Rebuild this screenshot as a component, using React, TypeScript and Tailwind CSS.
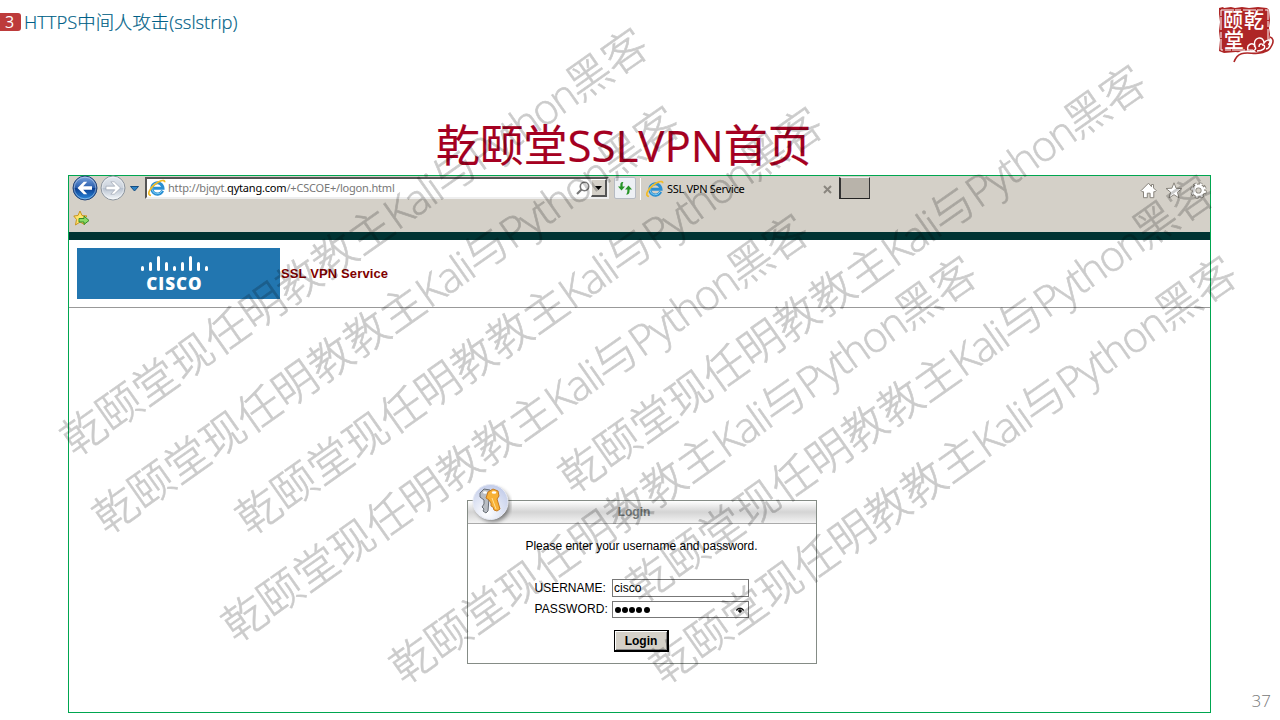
import React from 'react';

const marks: [number, number][] = [
  [83, 431], [115, 509], [258, 510], [244, 617], [412, 659], [581, 468], [649, 578], [672, 659],
];

function Watermark({ x, y }: { x: number; y: number }) {
  return (
    <div
      className="absolute flex h-[60px] origin-[22px_30px] rotate-[-35.1deg] items-center whitespace-nowrap font-['Open_Sans','Noto_Sans_CJK_SC',sans-serif] text-[43.8px] leading-[60px] font-light text-black opacity-20 [-webkit-text-stroke:0.7px_black]"
      style={{ left: x - 22, top: y - 30 }}
    >
      <p>
        乾颐堂现任明教教主<span className="text-[42px] tracking-[-1.8px]">Kali</span>与<span className="text-[42px] tracking-[-1.8px]">Python</span>黑客
      </p>
    </div>
  );
}

function IeIcon() {
  return (
    <svg width="18" height="18" viewBox="0 0 18 18" fill="none" className="shrink-0">
      <path d="M14.6 11.6A5.6 5.6 0 1 1 15 9.2H5.5" stroke="#2b8fd2" strokeWidth="3" />
      <path d="M14 12A5.4 5.4 0 0 1 4 10.5A5.5 5.5 0 0 1 9 4" stroke="#7accf4" strokeWidth="1" />
      <path d="M3 16.5C-1.5 16 1.5 9.5 7 5.3C11 2 16.5-.2 16.8 3.2" stroke="#f3bb25" strokeWidth="1.7" />
    </svg>
  );
}

function NavButton({ forward = false }: { forward?: boolean }) {
  const id = forward ? 'nav-forward' : 'nav-back';
  return (
    <svg width="26" height="26" viewBox="0 0 26 26" className="shrink-0">
      <defs>
        <linearGradient id={id} x1="0" y1="0" x2="0" y2="1">
          <stop offset="0" stopColor={forward ? '#e3e8ef' : '#7ca5df'} />
          <stop offset=".48" stopColor={forward ? '#ccd3dd' : '#2b5fae'} />
          <stop offset=".52" stopColor={forward ? '#b8c2d0' : '#0c3f91'} />
          <stop offset="1" stopColor={forward ? '#f7fafc' : '#2a8be0'} />
        </linearGradient>
      </defs>
      <circle cx="13" cy="13" r="12" fill={`url(#${id})`} stroke={forward ? '#8e969f' : '#294777'} />
      <circle cx="13" cy="13" r="10.8" fill="none" stroke="#fff" strokeOpacity=".4" />
      <path
        d="M5.5 13l6.3-6.2h3.4l-4 4.4H20v3.6h-8.8l4 4.4h-3.4z"
        fill="#fff"
        stroke={forward ? '#929ba7' : 'none'}
        strokeWidth=".6"
        transform={forward ? 'rotate(180 13 13)' : undefined}
      />
    </svg>
  );
}

function Seal() {
  return (
    <svg width="58" height="58" viewBox="0 0 58 58" className="shrink-0">
      <path d="M2 3l4-1 1 1 7-1 4 1 7-1 7 1 9-1 9 1 2 2 1 10-1 8 1 6-1 9-3 10-12-1-8 2-10-2-12 1-5-2 1-11-1-9 1-9-1-8z" fill="#ae2626" />
      <path d="M4 5h47v40H4z" fill="none" stroke="#fff" strokeWidth="1" strokeDasharray="13 1 6 2" />
      <g fill="#fff" className="font-['Noto_Sans_CJK_SC',sans-serif] text-[20px] font-medium">
        <text x="6" y="23">颐</text>
        <text x="27" y="23">乾</text>
        <text x="7" y="43">堂</text>
      </g>
      <path d="M17 57C22 43 34 50 43 48s9-4 13-8" fill="none" stroke="#fff" strokeWidth="5" />
      <circle cx="43" cy="39" r="9" fill="#ae2626" />
      <path d="M31 45c-2-6 5-8 7-4-3-9 9-11 9-3 5-7 11 0 7 3M33 46c4 1 8-3 4-5M42 42c0-4 4-4 4-1M40 46c6 0 9-3 7-6M49 44c5-1 5-5 2-5" fill="none" stroke="#fff" strokeWidth="1.4" />
      <path d="M17 57C22 43 34 50 43 48s10-4 12-8c2-4 1-7-2-8" fill="none" stroke="#ae2626" strokeWidth="1.6" />
    </svg>
  );
}

function CiscoLogo() {
  const bars = [[0, 5], [8, 9], [16, 15], [24, 9], [32, 5], [40, 9], [48, 15], [56, 9], [64, 5]];
  return (
    <div className="flex h-[51px] w-[203px] shrink-0 flex-col items-center bg-[#2276b0] pt-[7px] pr-[8px] text-white">
      <svg width="67" height="18" viewBox="0 0 67 18" fill="#fff">
        {bars.map(([x, h]) => <rect key={x} x={x} y={16 - h} width="3" height={h} rx="1.5" />)}
      </svg>
      <span className="mt-[1px] font-['Open_Sans',sans-serif] text-[17px] leading-[20px] font-extrabold tracking-[1px]">CISCO</span>
    </div>
  );
}

function KeysIcon() {
  return (
    <svg width="42" height="42" viewBox="0 0 42 42">
      <defs>
        <radialGradient id="disc" cx=".4" cy=".8" r=".8">
          <stop offset="0" stopColor="#fff" />
          <stop offset="1" stopColor="#c3cdea" />
        </radialGradient>
      </defs>
      <circle cx="23" cy="23" r="17" fill="#000" opacity=".45" className="blur-[2px]" />
      <circle cx="20.5" cy="20" r="17.5" fill="url(#disc)" stroke="#e8ebf4" />
      <path d="M10 11l4-4 6 1 2 4-3 4-1 13-2 2-3-2 1-2-2-2 2-3 0-4-4-3z" fill="#b9bdc3" stroke="#686e76" />
      <path d="M18 10l5-3 5 2 1 5-2 3 3 10-3 2-3-1-1-3-2-1 0-3-2-3-3-2z" fill="#f8b136" stroke="#c47a22" />
      <path d="M22 16l4 11" stroke="#ffe09a" strokeWidth="1" />
      <ellipse cx="24" cy="10.5" rx="2.3" ry="1.2" fill="#fff" />
      <ellipse cx="15" cy="10.5" rx="2" ry="1.2" fill="#fff" />
    </svg>
  );
}

function ToolIcons() {
  return (
    <div className="mt-[6px] mr-[3px] ml-auto flex gap-[7.5px]">
      <svg width="17" height="17" viewBox="0 0 17 17" fill="#fff" stroke="#88847c"><path d="M8.5 1.2L1 8.7l1 1h1.5v6h3.8v-4.5h2.8v4.5h3.7v-6h1.5l1-1-2.8-2.8V2.5h-2v2.2z" /></svg>
      <svg width="18" height="17" viewBox="0 0 18 17" fill="#fff" stroke="#88847c"><path d="M9 .8l2.1 5.4 5.9.3-4.6 3.7 1.6 5.7-5-3.2-5 3.2 1.6-5.7L1 6.5l5.9-.3z" /></svg>
      <svg width="17" height="17" viewBox="0 0 17 17" fill="none">
        <circle cx="8.5" cy="8.5" r="6.6" stroke="#88847c" strokeWidth="3.5" strokeDasharray="3.2 1.984" />
        <circle cx="8.5" cy="8.5" r="4.6" stroke="#88847c" strokeWidth="4.6" />
        <circle cx="8.5" cy="8.5" r="6.4" stroke="#fff" strokeWidth="2.2" strokeDasharray="2.1 2.926" strokeDashoffset="-.5" />
        <circle cx="8.5" cy="8.5" r="4.5" stroke="#fff" strokeWidth="2.8" />
      </svg>
    </div>
  );
}

function BrowserChrome() {
  return (
    <div className="h-[56px] shrink-0 bg-[#d4d0c8]">
      <div className="flex h-[26px] items-start pl-[3px] font-['Noto_Sans',sans-serif] text-[11px] text-black">
        <div className="-mt-px flex gap-[2px]"><NavButton /><NavButton forward /></div>
        <svg width="9" height="6" className="mt-[10px] ml-[4px] shrink-0"><path d="M.5.5h8L4.5 5z" fill="#2c83c7" stroke="#164e82" /></svg>
        <div className="mt-[1px] ml-[6px] flex h-[22px] w-[464px] shrink-0 items-center border-2 border-t-[#555] border-r-[#eee] border-b-[#eee] border-l-[#555] bg-white pl-[1px]">
          <IeIcon />
          <div className="ml-[2px] text-[11px] tracking-[-0.19px] whitespace-nowrap text-[#777]">http://bjqyt.<span className="text-black">qytang.com</span>/+CSCOE+/logon.html</div>
          <svg width="14" height="15" viewBox="0 0 14 15" className="ml-auto" fill="none" stroke="#777"><circle cx="8.5" cy="5.5" r="4.2" strokeWidth="1.6" /><path d="M5.5 8.5L1 13" strokeWidth="2.2" /></svg>
          <div className="ml-[1px] flex h-[18px] w-[16px] items-center justify-center border-t border-r-2 border-b-2 border-l border-t-white border-r-[#555] border-b-[#555] border-l-white bg-[#d4d0c8]"><svg width="7" height="4"><path d="M0 0h7L3.5 4z" /></svg></div>
        </div>
        <div className="mt-[1px] ml-[5px] flex h-[22px] w-[22px] shrink-0 items-center justify-center rounded-[2px] border border-[#b6bbc3] bg-[#edf0f4]">
          <svg width="16" height="14" viewBox="0 0 16 14" fill="#269426"><path d="M6.5 1C3 1 3.4 3 3.4 5.5H1L4.5 9.5 8 5.5H5.6C5.6 3 5.5 2 6.5 1zM9 13.5c3.5 0 3.6-2 3.6-5H15l-3.5-4L8 8.5h2.4c0 3-.4 4-1.4 5z" /></svg>
        </div>
        <div className="mt-[2px] ml-[4px] flex h-[22px] w-[199px] shrink-0 items-center border-l border-white pl-[5px]">
          <IeIcon />
          <span className="ml-[3px] text-[11px] tracking-[-0.3px]">SSL VPN Service</span>
          <svg width="9" height="9" viewBox="0 0 9 9" className="mr-[7px] ml-auto" stroke="#8a867f" strokeWidth="2"><path d="M1 1l7 7M8 1L1 8" /></svg>
        </div>
        <div className="mt-[1px] h-[22px] w-[31px] shrink-0 border-t border-r border-b border-l-2 border-t-[#eee] border-r-[#333] border-b-[#222] border-l-[#333] bg-[#b8b3aa]" />
        <ToolIcons />
      </div>
      <svg width="17" height="17" viewBox="0 0 17 17" className="mt-[8px] ml-[4px]"><path d="M7 1l2 4.500 5 .5-3.500 3.500 1 5L7 12l-4.500 3 1-5.500L.8 6 5 5.500z" fill="#ffe56d" stroke="#c9931f" /><path d="M6 8.500h5V6l5 4.500-5 4v-2.500H6z" fill="#8ada65" stroke="#348c2b" /></svg>
    </div>
  );
}

export default function App() {
  return (
    <main className="relative flex h-[720px] w-[1280px] flex-col overflow-hidden bg-white font-['Liberation_Sans',sans-serif]">
      <header className="flex h-[120px] shrink-0 items-start justify-between pr-[5px]">
        <div className="mt-[9px] flex items-center font-['Open_Sans','Noto_Sans_CJK_SC',sans-serif]">
          <span className="flex h-[18px] w-[21px] items-center justify-center rounded-r-[3px] bg-[#bd3b3b] pr-[2px] text-[16px] text-white">3</span>
          <span className="ml-[3px] text-[18.4px] leading-[26px] font-light whitespace-nowrap text-[#005f87] [-webkit-text-stroke:0.2px_#005f87]">HTTPS中间人攻击(sslstrip)</span>
        </div>
        <div className="mt-[5px]"><Seal /></div>
      </header>
      <h1 className="ml-[436px] h-[55px] shrink-0 font-['Open_Sans','Noto_Sans_CJK_SC',sans-serif] text-[43.8px] leading-[50px] whitespace-nowrap text-[#a50021] [-webkit-text-stroke:0.2px_#a50021]">乾颐堂SSLVPN首页</h1>
      <section className="ml-[68px] flex h-[538px] w-[1143px] shrink-0 flex-col border border-[#00a650] bg-white">
        <BrowserChrome />
        <div className="h-[8px] shrink-0 bg-[#003333]" />
        <div className="flex h-[68px] shrink-0 items-center border-b border-[#999] pl-[8px]">
          <CiscoLogo />
          <b className="ml-[1px] text-[13px] tracking-[0.13px] whitespace-nowrap text-[#800000]">SSL VPN Service</b>
        </div>
        <div className="relative mt-[192px] ml-[398px] flex h-[164px] w-[350px] shrink-0 flex-col border border-[#858c86]">
          <div className="flex h-[23px] items-center justify-center border-b border-[#aaa] bg-linear-to-b from-[#fff] via-[#d4d4d4] to-[#f3f3f3] pr-[16px] text-[12px] font-bold text-[#737878]">Login</div>
          <div className="absolute -top-[19px] left-[2px]"><KeysIcon /></div>
          <p className="mt-[14px] pr-[1px] text-center text-[12px] leading-[16px] text-black">Please enter your username and password.</p>
          <div className="mt-[25px] flex h-[18px] items-center text-[12px]"><span className="ml-[66.5px] w-[77.5px]">USERNAME:</span><div className="h-[18px] w-[137px] border border-[#777] bg-white px-[1px] leading-[16px]">cisco</div></div>
          <div className="mt-[4px] flex h-[17px] items-center text-[12px]"><span className="-mt-[2px] ml-[66.5px] w-[77.5px] tracking-[0.1px] whitespace-nowrap">PASSWORD:</span><div className="flex h-[17px] w-[137px] items-center justify-between border border-[#777] bg-white pr-[4px] pl-[1.5px]"><span className="flex gap-[1.3px]">{[0, 1, 2, 3, 4].map(i => <i key={i} className="size-[6px] rounded-full bg-black" />)}</span><svg width="8" height="6" viewBox="0 0 8 6" fill="none" stroke="#111"><path d="M.3 3.5Q4-1 7.7 3.5" strokeWidth="1.3" /><circle cx="4" cy="4" r="1.3" fill="#111" /></svg></div></div>
          <button className="mt-[12px] ml-[146px] h-[22px] w-[55px] border-t border-r-2 border-b-2 border-l border-black bg-[#d4d0c8] text-[12px] leading-[18px] font-bold shadow-[inset_1px_1px_white,inset_-1px_-1px_#888]">Login</button>
        </div>
      </section>
      <span className="absolute right-[9px] bottom-[8px] font-['Open_Sans',sans-serif] text-[17px] leading-[22px] font-light text-[#777]">37</span>
      <div className="pointer-events-none absolute inset-0" aria-hidden="true">{marks.map(([x, y]) => <Watermark key={`${x}-${y}`} x={x} y={y} />)}</div>
    </main>
  );
}
